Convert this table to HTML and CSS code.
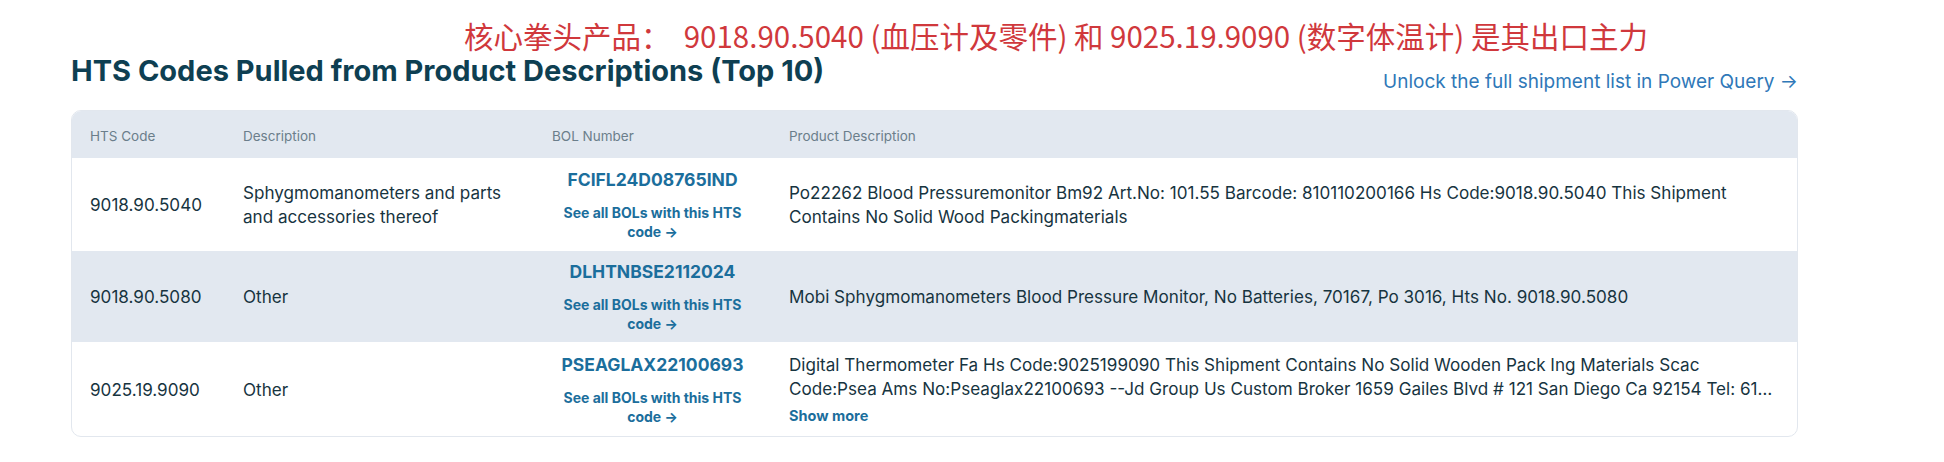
FILE: index.html
```html
<!DOCTYPE html>
<html lang="en">
<head>
<meta charset="utf-8">
<title>HTS Codes</title>
<link rel="stylesheet" href="styles.css">
</head>
<body>
<div class="page">
  <div class="note">核心拳头产品：&nbsp; 9018.90.5040 (血压计及零件) 和 9025.19.9090 (数字体温计) 是其出口主力</div>
  <div class="head">
    <h2 class="title">HTS Codes Pulled from Product Descriptions (Top 10)</h2>
    <a class="unlock" href="#">Unlock the full shipment list in Power Query →</a>
  </div>
  <div class="card">
    <table class="hts">
      <colgroup>
        <col class="c1"><col class="c2"><col class="c3"><col class="c4">
      </colgroup>
      <thead>
        <tr>
          <th>HTS Code</th>
          <th>Description</th>
          <th>BOL Number</th>
          <th>Product Description</th>
        </tr>
      </thead>
      <tbody>
        <tr>
          <td>9018.90.5040</td>
          <td>Sphygmomanometers and parts and accessories thereof</td>
          <td class="bol">
            <div class="bol-num">FCIFL24D08765IND</div>
            <a class="bol-link" href="#">See all BOLs with this HTS code →</a>
          </td>
          <td>Po22262 Blood Pressuremonitor Bm92 Art.No: 101.55 Barcode: 810110200166 Hs Code:9018.90.5040 This Shipment Contains No Solid Wood Packingmaterials</td>
        </tr>
        <tr class="alt">
          <td>9018.90.5080</td>
          <td>Other</td>
          <td class="bol">
            <div class="bol-num">DLHTNBSE2112024</div>
            <a class="bol-link" href="#">See all BOLs with this HTS code →</a>
          </td>
          <td>Mobi Sphygmomanometers Blood Pressure Monitor, No Batteries, 70167, Po 3016, Hts No. 9018.90.5080</td>
        </tr>
        <tr>
          <td>9025.19.9090</td>
          <td>Other</td>
          <td class="bol">
            <div class="bol-num">PSEAGLAX22100693</div>
            <a class="bol-link" href="#">See all BOLs with this HTS code →</a>
          </td>
          <td>
            <div class="clamp">Digital Thermometer Fa Hs Code:9025199090 This Shipment Contains No Solid Wooden Pack Ing Materials Scac Code:Psea Ams No:Pseaglax22100693 --Jd Group Us Custom Broker 1659 Gailes Blvd # 121 San Diego Ca 92154 Tel: 619 661 0080 Fax: 619 661 0088</div>
            <a class="more" href="#">Show more</a>
          </td>
        </tr>
      </tbody>
    </table>
  </div>
</div>
</body>
</html>
```
FILE: styles.css
```css
* { box-sizing: border-box; }
html, body { margin: 0; padding: 0; background: #ffffff; }
body {
  font-family: Inter, "Noto Sans", sans-serif;
  color: #17343f;
}
.page {
  width: 1944px;
  padding: 17px 146px 0 71px;
}
.note {
  font-family: "Noto Sans CJK SC", "Noto Sans", sans-serif;
  font-size: 29.5px;
  line-height: 36px;
  color: #d0383c;
  padding-left: 393px;
  white-space: nowrap;
}
.head {
  display: flex;
  justify-content: space-between;
  align-items: flex-start;
}
.title {
  margin: 0;
  font-size: 29px;
  line-height: 36px;
  font-weight: 700;
  color: #0e3f52;
}
.unlock {
  margin-top: 17px;
  font-size: 19px;
  line-height: 24px;
  color: #2f78b8;
  text-decoration: none;
}
.card {
  margin-top: 16px;
  border: 1px solid #e2e7ee;
  border-radius: 10px;
  overflow: hidden;
}
.hts {
  width: 100%;
  border-collapse: collapse;
  table-layout: fixed;
}
.c1 { width: 153px; }
.c2 { width: 309px; }
.c3 { width: 237px; }
.hts th {
  height: 47px;
  padding: 3px 18px 0;
  background: #e2e8f0;
  text-align: left;
  font-size: 13.5px;
  font-weight: 400;
  color: #6b7e8b;
}
.hts td {
  padding: 11px 18px 10px;
  vertical-align: middle;
  font-size: 17.1px;
  line-height: 24px;
  color: #17343f;
}
.hts tr.alt td {
  background: #e2e8f0;
  padding: 10px 18px 9px;
}
.hts td.bol { text-align: center; }
.bol-num {
  font-size: 17.5px;
  line-height: 22px;
  font-weight: 700;
  color: #1b6e9c;
  margin-bottom: 12px;
}
.bol-link {
  display: block;
  max-width: 195px;
  margin: 0 auto;
  font-size: 14px;
  line-height: 19px;
  font-weight: 700;
  color: #1b6e9c;
  text-decoration: none;
}
.clamp {
  display: -webkit-box;
  -webkit-line-clamp: 2;
  -webkit-box-orient: vertical;
  overflow: hidden;
}
.more {
  display: block;
  margin-top: 5px;
  font-size: 14.5px;
  line-height: 20px;
  font-weight: 700;
  color: #1b6e9c;
  text-decoration: none;
}
```
